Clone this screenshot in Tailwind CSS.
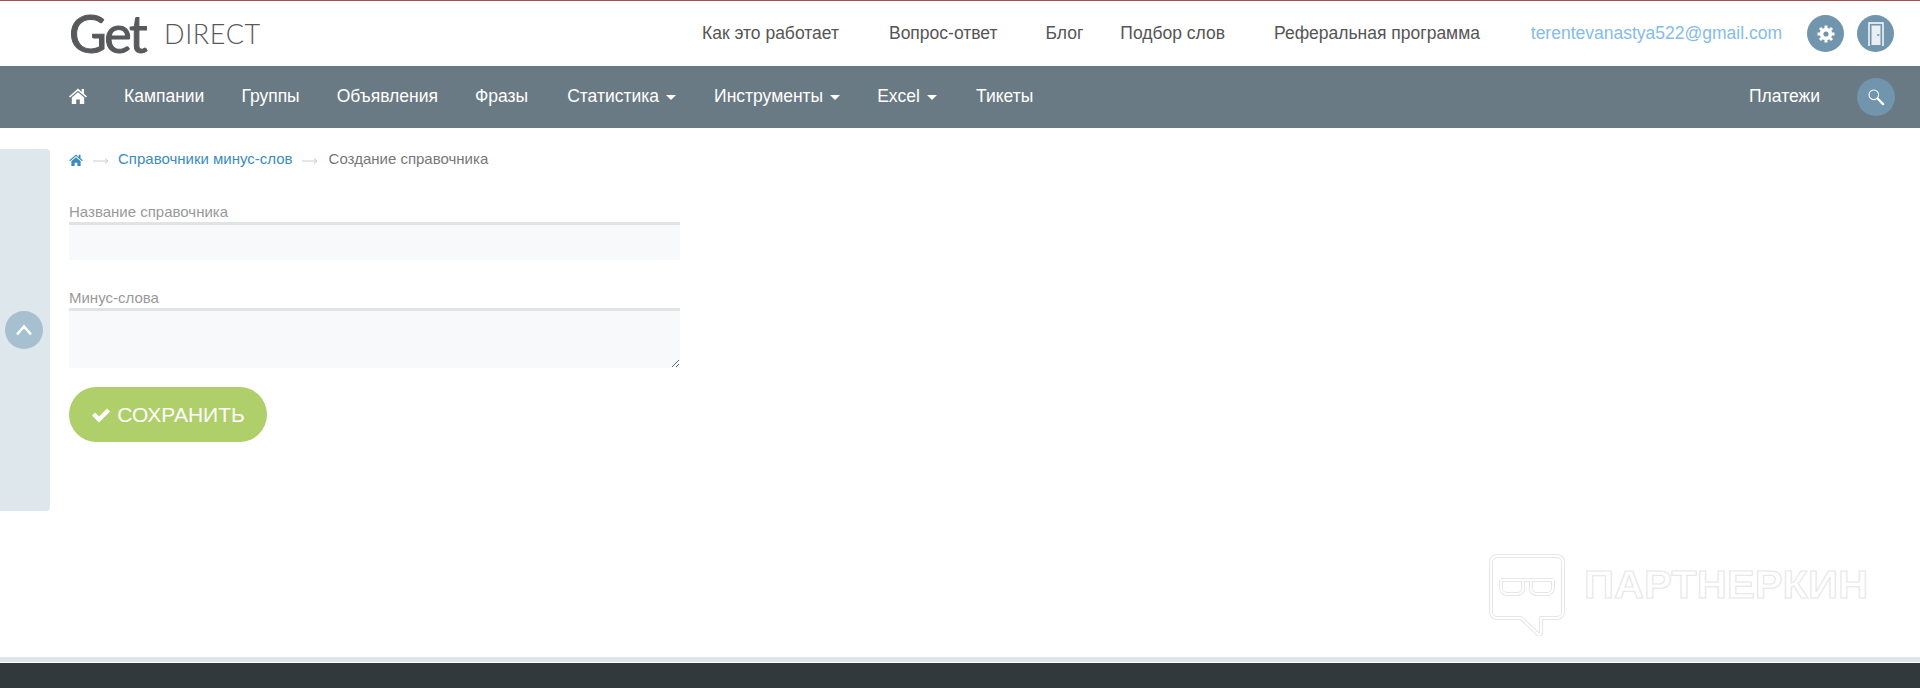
<!DOCTYPE html>
<html lang="ru">
<head>
    <meta charset="UTF-8">
    <meta name="viewport" content="width=device-width, initial-scale=1.0">
    <title>Создание справочника - GetDirect</title>
    <script src="https://cdn.jsdelivr.net/npm/@tailwindcss/browser@4"></script>
</head>
<body class="bg-white h-[688px] overflow-hidden flex flex-col font-['Liberation_Sans',Arial,sans-serif]">
    <!-- top bar -->
    <header class="h-[66px] shrink-0 border-t border-[#a94f4f] flex items-center pl-[69px] pr-[26px] text-[17.5px] text-[#555]">
        <a href="#" class="flex items-center text-[#58595b] w-[400px] h-[65px]">
            <span class="font-['Lato',sans-serif] font-normal text-[52px] leading-none tracking-[-2.5px] mt-[-1px] [-webkit-text-stroke:1px_#58595b]">Get</span>
            <span class="font-['Lato',sans-serif] font-light text-[27px] leading-none ml-[19px] tracking-[0.6px]">DIRECT</span>
        </a>
        <nav class="flex items-center ml-[233px]">
            <a href="#">Как это работает</a>
            <a href="#" class="ml-[50px]">Вопрос-ответ</a>
            <a href="#" class="ml-[48px]">Блог</a>
            <a href="#" class="ml-[37px]">Подбор слов</a>
            <a href="#" class="ml-[49px]">Реферальная программа</a>
        </nav>
        <a href="#" class="ml-auto text-[#85bce8]">terentevanastya522@gmail.com</a>
        <a href="#" class="ml-[25px] w-[37px] h-[37px] rounded-full bg-[#7095ad] flex items-center justify-center">
            <svg width="18" height="18" viewBox="0 0 18 18" fill="#fff"><circle cx="9" cy="9" r="6.2"/><g stroke="#fff" stroke-width="3"><path d="M9 0.5v17M0.5 9h17M3 3l12 12M15 3L3 15"/></g><circle cx="9" cy="9" r="2.6" fill="#7095ad"/></svg>
        </a>
        <a href="#" class="ml-[13px] w-[37px] h-[37px] rounded-full bg-[#7095ad] flex items-center justify-center">
            <svg width="16" height="24" viewBox="0 0 16 24" fill="none"><path d="M1 24V1h14v23" stroke="#fff" stroke-width="1.4"/><path d="M3.5 3.5h9V23h-9z" fill="#fff" fill-opacity=".85"/><path d="M9 13h2.5" stroke="#7095ad" stroke-width="1.4"/></svg>
        </a>
    </header>

    <!-- main menu -->
    <nav class="h-[62px] shrink-0 bg-[#6a7a84] flex items-center pl-[69px] pr-[25px] pb-[2px] text-[17.5px] text-white">
        <a href="#" aria-label="Главная">
            <svg width="18" height="16" viewBox="0 0 18 16" fill="#fff"><path d="M9 0.5L0 8.4l1 1.2L9 2.8l8 6.8 1-1.2-3-2.6V1h-2.4v2.9z"/><path d="M9 4.2L2.8 9.5V16h4.4v-4.4h3.6V16h4.4V9.5z"/></svg>
        </a>
        <a href="#" class="ml-[37px]">Кампании</a>
        <a href="#" class="ml-[37px]">Группы</a>
        <a href="#" class="ml-[37px]">Объявления</a>
        <a href="#" class="ml-[37px]">Фразы</a>
        <a href="#" class="ml-[39px] flex items-center">Статистика<span class="ml-[7px] mt-[2px] border-x-[5px] border-x-transparent border-t-[5px] border-t-white"></span></a>
        <a href="#" class="ml-[38px] flex items-center">Инструменты<span class="ml-[7px] mt-[2px] border-x-[5px] border-x-transparent border-t-[5px] border-t-white"></span></a>
        <a href="#" class="ml-[37px] flex items-center">Excel<span class="ml-[7px] mt-[2px] border-x-[5px] border-x-transparent border-t-[5px] border-t-white"></span></a>
        <a href="#" class="ml-[39px]">Тикеты</a>
        <a href="#" class="ml-auto">Платежи</a>
        <a href="#" class="ml-[37px] mt-[2px] w-[38px] h-[38px] rounded-full bg-[#7095ad] flex items-center justify-center" aria-label="Поиск">
            <svg width="18" height="18" viewBox="0 0 18 18" fill="none" stroke="#fff"><circle cx="6.8" cy="6.8" r="4.8" stroke-width="1.1"/><path d="M10.5 10.5l5.6 5.6" stroke-width="2.4" stroke-linecap="round"/></svg>
        </a>
    </nav>

    <!-- content -->
    <div class="flex-1 flex pt-[21px] relative">
        <aside class="w-[50px] h-[362px] shrink-0 bg-[#dde7ec] rounded-r-[4px] flex items-center pl-[5px]">
            <button class="w-[38px] h-[38px] rounded-full bg-[#a6c0cf] flex items-center justify-center" aria-label="Свернуть">
                <svg width="18" height="12" viewBox="0 0 18 12" fill="none" stroke="#fff" stroke-width="2.6"><path d="M2 10.5l7-8 7 8"/></svg>
            </button>
        </aside>
        <main class="ml-[19px] w-[611px]">
            <div class="flex items-center h-[20px] pt-[1px] text-[15px] text-[#777]">
                <svg width="14" height="12" viewBox="0 0 18 16" fill="#3a8cc1"><path d="M9 0.5L0 8.4l1 1.2L9 2.8l8 6.8 1-1.2-3-2.6V1h-2.4v2.9z"/><path d="M9 4.2L2.8 9.5V16h4.4v-4.4h3.6V16h4.4V9.5z"/></svg>
                <svg width="16" height="8" viewBox="0 0 16 8" fill="none" stroke="#ccc" class="ml-[10px] mt-[2px]"><path d="M0 4h15M12 1.5L15 4l-3 2.5"/></svg>
                <a href="#" class="ml-[9px] text-[#3a8cc1]">Справочники минус-слов</a>
                <svg width="16" height="8" viewBox="0 0 16 8" fill="none" stroke="#ccc" class="ml-[9px] mt-[2px]"><path d="M0 4h15M12 1.5L15 4l-3 2.5"/></svg>
                <span class="ml-[11px]">Создание справочника</span>
            </div>
            <form class="mt-[33px]">
                <label class="block text-[15px] leading-[20px] text-[#999]">Название справочника</label>
                <input type="text" class="block w-full h-[38px] bg-[#f8f9fb] border-t-[3px] border-[#e2e4e4] outline-none">
                <label class="block mt-[28px] text-[15px] leading-[20px] text-[#999]">Минус-слова</label>
                <textarea class="block w-full h-[60px] bg-[#f8f9fb] border-t-[3px] border-[#e2e4e4] outline-none resize-y"></textarea>
                <button type="button" class="mt-[19px] h-[55px] w-[198px] rounded-full bg-[#afcf6b] text-white text-[21px] flex items-center justify-center">
                    <svg width="20" height="16" viewBox="0 0 20 16" fill="#fff" class="mr-[6px]"><path d="M1 8.5l3-3 4 4L16 1.5l3 3L8 15.5z"/></svg>
                    СОХРАНИТЬ
                </button>
            </form>
        </main>

        <!-- watermark -->
        <div class="absolute left-[1489px] top-[426px] flex items-start">
            <svg width="76" height="82" viewBox="0 0 76 82" fill="none">
                <g stroke="#e6e6e6" stroke-width="4" stroke-linejoin="round">
                    <path d="M8 2h60a6 6 0 0 1 6 6v50a6 6 0 0 1-6 6H52v14a2 2 0 0 1-4 1L32 64H8a6 6 0 0 1-6-6V8a6 6 0 0 1 6-6z"/>
                    <path d="M12 26h52M12 26v8a6 6 0 0 0 6 6h10a6 6 0 0 0 6-8v-6M42 26v6a6 6 0 0 0 6 8h10a6 6 0 0 0 6-6v-8"/>
                </g>
                <g stroke="#fff" stroke-width="2" stroke-linejoin="round">
                    <path d="M8 2h60a6 6 0 0 1 6 6v50a6 6 0 0 1-6 6H52v14a2 2 0 0 1-4 1L32 64H8a6 6 0 0 1-6-6V8a6 6 0 0 1 6-6z"/>
                    <path d="M12 26h52M12 26v8a6 6 0 0 0 6 6h10a6 6 0 0 0 6-8v-6M42 26v6a6 6 0 0 0 6 8h10a6 6 0 0 0 6-6v-8"/>
                </g>
            </svg>
            <svg width="288" height="44" viewBox="0 0 288 44" class="ml-[18px] mt-[10px]">
                <text x="1" y="34" textLength="284" lengthAdjust="spacingAndGlyphs" fill="#fff" stroke="#e6e6e6" font-family="Liberation Sans" font-weight="700" font-size="38">ПАРТНЕРКИН</text>
            </svg>
        </div>
    </div>

    <!-- footer -->
    <div class="h-[5px] shrink-0 bg-[#dde7ea]"></div>
    <footer class="h-[25px] shrink-0 mt-[1px] bg-[#32393c]"></footer>
</body>
</html>
